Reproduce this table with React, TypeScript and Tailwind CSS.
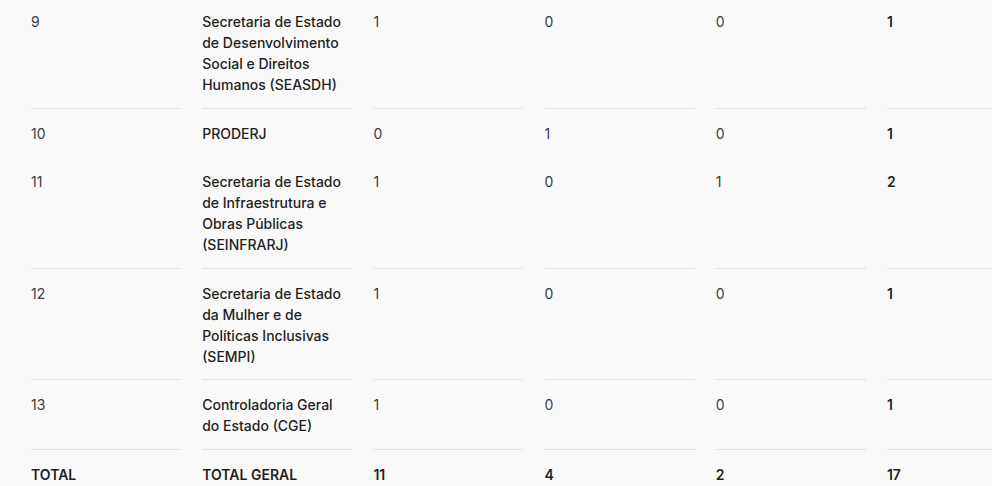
type Row = {
  n: string;
  name: string;
  a: string;
  b: string;
  c: string;
  total: string;
  noLine?: boolean;
};

const rows: Row[] = [
  { n: "9", name: "Secretaria de Estado de Desenvolvimento Social e Direitos Humanos (SEASDH)", a: "1", b: "0", c: "0", total: "1" },
  { n: "10", name: "PRODERJ", a: "0", b: "1", c: "0", total: "1", noLine: true },
  { n: "11", name: "Secretaria de Estado de Infraestrutura e Obras Públicas (SEINFRARJ)", a: "1", b: "0", c: "1", total: "2" },
  { n: "12", name: "Secretaria de Estado da Mulher e de Políticas Inclusivas (SEMPI)", a: "1", b: "0", c: "0", total: "1" },
  { n: "13", name: "Controladoria Geral do Estado (CGE)", a: "1", b: "0", c: "0", total: "1" },
];

function Cell({ children, className = "", line = true }: { children: React.ReactNode; className?: string; line?: boolean }) {
  return (
    <div className={`border-b pt-[14px] pb-[12.5px] ${line ? "border-[#e3e3e3]" : "border-transparent"} ${className}`}>
      {children}
    </div>
  );
}

export default function App() {
  return (
    <div className="h-[486px] w-full overflow-hidden bg-[#f9f9f9] font-['Inter',sans-serif] text-[14px] leading-[21px]">
      <div className="-mt-[3px] grid w-max grid-cols-[repeat(6,150px)] gap-x-[21.2px] pl-[31px]">
        {rows.map((r) => (
          <div key={r.n} className="contents">
            <Cell line={!r.noLine} className="text-[#3c4043]">{r.n}</Cell>
            <Cell line={!r.noLine} className="font-medium text-[#1f1f1f]">{r.name}</Cell>
            <Cell line={!r.noLine} className="text-[#3c4043]">{r.a}</Cell>
            <Cell line={!r.noLine} className="text-[#3c4043]">{r.b}</Cell>
            <Cell line={!r.noLine} className="text-[#3c4043]">{r.c}</Cell>
            <Cell line={!r.noLine} className="font-semibold text-[#1f1f1f]">{r.total}</Cell>
          </div>
        ))}
        <Cell line={false} className="font-semibold text-[#1f1f1f]">TOTAL</Cell>
        <Cell line={false} className="font-semibold text-[#1f1f1f]">TOTAL GERAL</Cell>
        <Cell line={false} className="font-semibold text-[#1f1f1f]">11</Cell>
        <Cell line={false} className="font-semibold text-[#1f1f1f]">4</Cell>
        <Cell line={false} className="font-semibold text-[#1f1f1f]">2</Cell>
        <Cell line={false} className="font-semibold text-[#1f1f1f]">17</Cell>
      </div>
    </div>
  );
}
